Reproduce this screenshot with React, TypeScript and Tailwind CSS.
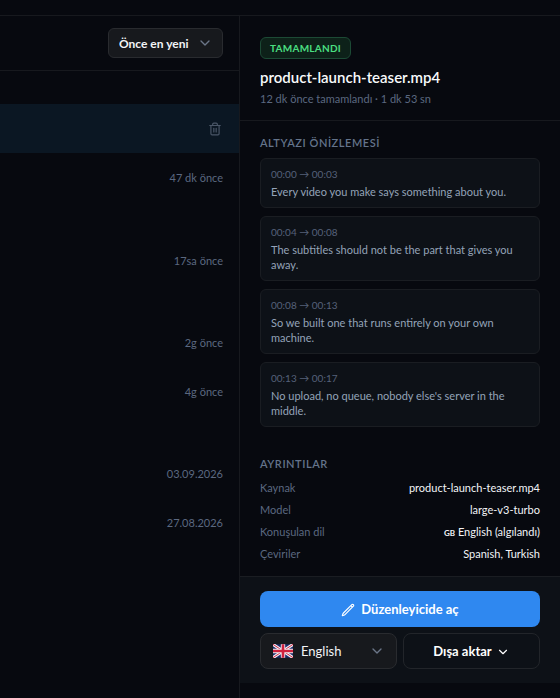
import { ChevronDown, Trash2 } from 'lucide-react'
import { HiOutlinePencil } from 'react-icons/hi2'

interface Cue {
  time: string
  text: string
}

interface JobGroup {
  id: string
  rows: string[]
}

const cues: Cue[] = [
  { time: '00:00 → 00:03', text: 'Every video you make says something about you.' },
  { time: '00:04 → 00:08', text: 'The subtitles should not be the part that gives you away.' },
  { time: '00:08 → 00:13', text: 'So we built one that runs entirely on your own machine.' },
  { time: '00:13 → 00:17', text: "No upload, no queue, nobody else's server in the middle." },
]

const olderGroups: JobGroup[] = [
  { id: 'yesterday', rows: ['17sa önce'] },
  { id: 'week', rows: ['2g önce', '4g önce'] },
  { id: 'older', rows: ['03.09.2026', '27.08.2026'] },
]

function FlagGB({ className }: { className?: string }) {
  return (
    <svg viewBox="0 0 60 40" className={className} aria-hidden="true">
      <rect width="60" height="40" fill="#1d2c6b" />
      <path d="M0 0L60 40M60 0L0 40" stroke="#f1f1f5" strokeWidth="9" />
      <path d="M0 0L60 40M60 0L0 40" stroke="#d0213d" strokeWidth="3" />
      <path d="M30 0V40M0 20H60" stroke="#f1f1f5" strokeWidth="13" />
      <path d="M30 0V40M0 20H60" stroke="#d0213d" strokeWidth="8" />
    </svg>
  )
}

function JobRow({ when }: { when: string }) {
  return (
    <li className="flex h-[49px] items-center justify-end px-4 pt-px text-[11px] text-[#5b6880]">{when}</li>
  )
}

function JobList() {
  return (
    <section className="flex w-3/7 flex-col border-r border-[#17191e]">
      <div className="flex justify-end border-b border-[#17191e] px-4 py-3">
        <div className="relative">
          <select
            aria-label="Sıralama"
            className="h-[30px] w-[115px] appearance-none rounded-md border border-[#292b2f] bg-[#17191d] pt-px pr-7 pl-[10px] text-[12px] font-bold text-[#f2f4f7]"
          >
            <option>Önce en yeni</option>
            <option>Önce en eski</option>
          </select>
          <ChevronDown className="pointer-events-none absolute top-[7px] right-[10px] size-4" color="#6b7688" strokeWidth={2} />
        </div>
      </div>
      <div className="flex flex-col pt-[33px]">
        <ul className="pb-px">
          <li className="flex h-[49px] items-center justify-end bg-[#0b1723] px-4">
            <button type="button" aria-label="Sil" className="flex size-4 items-center justify-center text-[#4b5768]">
              <Trash2 className="size-[14px]" />
            </button>
          </li>
          <JobRow when="47 dk önce" />
        </ul>
        {olderGroups.map((group) => (
          <ul key={group.id} className="pt-[33px]">
            {group.rows.map((when) => (
              <JobRow key={when} when={when} />
            ))}
          </ul>
        ))}
      </div>
    </section>
  )
}

function DetailRow({ label, children }: { label: string; children: React.ReactNode }) {
  return (
    <div className="flex h-[22px] items-center justify-between text-[11px]">
      <dt className="text-[#5b6880]">{label}</dt>
      <dd className="text-[#f2f4f7]">{children}</dd>
    </div>
  )
}

function JobDetails() {
  return (
    <aside className="flex flex-1 flex-col pb-[15px]">
      <header className="border-b border-[#17191e] px-5 pt-[21px] pb-[13px]">
        <p className="flex h-[22px] w-fit items-center rounded-md border border-[#1c4a35] bg-[#0d2119] px-[9px] text-[10px] font-bold tracking-wide text-[#4ade80]">
          TAMAMLANDI
        </p>
        <h1 className="mt-[6px] text-[15px] leading-[24px] font-semibold text-[#f8fafc]">product-launch-teaser.mp4</h1>
        <p className="mt-[2px] text-[11px] leading-[16px] text-[#5b6880]">12 dk önce tamamlandı · 1 dk 53 sn</p>
      </header>

      <div className="flex-1 px-5 pt-[14px]">
        <h2 className="text-[11px] leading-[16px] font-semibold tracking-wider text-[#64748b]">ALTYAZI ÖNİZLEMESİ</h2>
        <ol className="mt-[7px] flex flex-col gap-2">
          {cues.map((cue) => (
            <li key={cue.time} className="rounded-md border border-[#1a1d22] bg-[#0d1117] px-[10px] py-2">
              <p className="text-[10px] leading-[15px] text-[#56617a]">{cue.time}</p>
              <p className="mt-[2px] text-[11px] leading-[15px] text-[#94a3b8]">{cue.text}</p>
            </li>
          ))}
        </ol>

        <h2 className="mt-[29px] text-[11px] leading-[16px] font-semibold tracking-wider text-[#64748b]">AYRINTILAR</h2>
        <dl className="mt-[5px]">
          <DetailRow label="Kaynak">product-launch-teaser.mp4</DetailRow>
          <DetailRow label="Model">large-v3-turbo</DetailRow>
          <DetailRow label="Konuşulan dil">
            <span className="text-[8px] font-bold">GB</span> English (algılandı)
          </DetailRow>
          <DetailRow label="Çeviriler">Spanish, Turkish</DetailRow>
        </dl>
      </div>

      <footer className="flex flex-col gap-[6px] border-t border-[#1a1d22] bg-[#0d1117] px-5 py-[14px]">
        <button
          type="button"
          className="flex h-9 items-center justify-center gap-[6px] rounded-lg bg-[#2f88f0] pt-px text-[13px] font-bold text-white"
        >
          <HiOutlinePencil className="size-[14px]" strokeWidth={2} />
          Düzenleyicide aç
        </button>
        <div className="grid grid-cols-2 gap-[6px]">
          <div className="relative">
            <FlagGB className="pointer-events-none absolute top-[11px] left-[13px] h-[14px] w-5" />
            <select
              aria-label="Dil"
              className="h-9 w-full appearance-none rounded-lg border border-[#292b2f] bg-[#17191d] pt-px pr-8 pl-10 text-[13px] text-[#f2f4f7]"
            >
              <option>English</option>
              <option>Spanish</option>
              <option>Turkish</option>
            </select>
            <ChevronDown className="pointer-events-none absolute top-[10px] right-3 size-4" color="#6b7688" strokeWidth={2} />
          </div>
          <button
            type="button"
            className="flex h-9 items-center justify-center gap-1 rounded-lg border border-[#22252a] pt-px text-[13px] font-bold text-white"
          >
            Dışa aktar
            <ChevronDown className="size-[14px]" strokeWidth={2} />
          </button>
        </div>
      </footer>
    </aside>
  )
}

export default function App() {
  return (
    <div className="flex min-h-screen flex-col bg-[#07090f] font-['Lato','Noto_Sans',sans-serif]">
      <div className="h-4 border-b border-[#17191e]" />
      <main className="flex flex-1">
        <JobList />
        <JobDetails />
      </main>
    </div>
  )
}
